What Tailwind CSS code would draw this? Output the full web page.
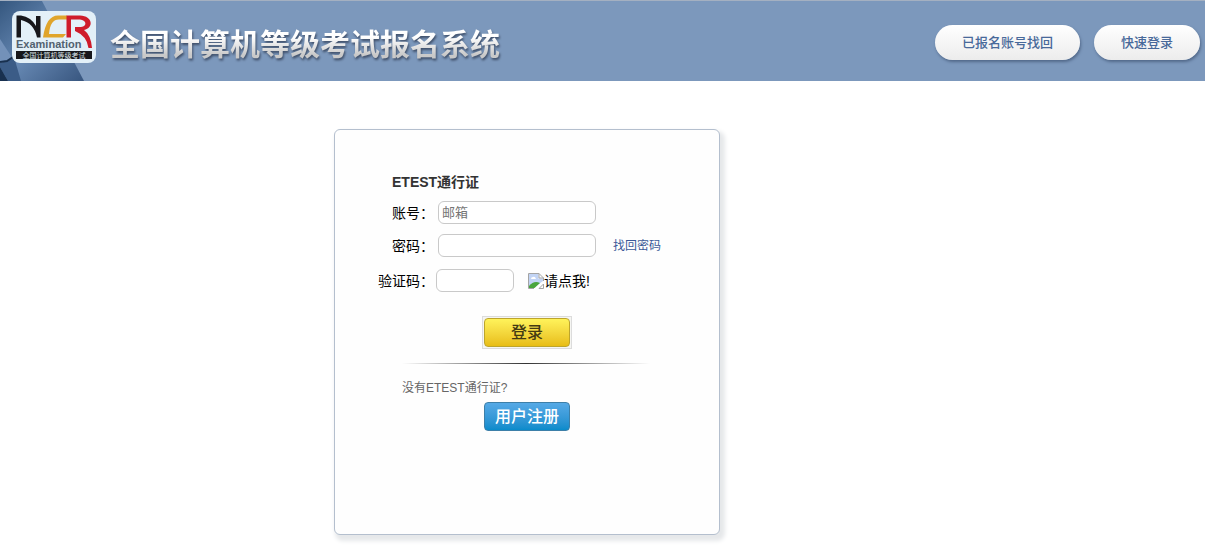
<!DOCTYPE html>
<html lang="zh-CN">
<head>
<meta charset="utf-8">
<meta name="viewport" content="width=device-width, initial-scale=1">
<title>全国计算机等级考试报名系统</title>
<script src="https://cdn.jsdelivr.net/npm/@tailwindcss/browser@4"></script>
</head>
<body class="bg-white font-['Liberation_Sans','Noto_Sans_CJK_SC',sans-serif] text-sm text-black">
<header class="relative flex h-[81px] items-center justify-between overflow-hidden border-t border-[#a4b0c1] bg-[#7c98bc] pr-[5px] pl-3">
  <svg class="absolute top-0 left-0" width="84" height="80" viewBox="0 0 84 80" aria-hidden="true">
    <defs><linearGradient id="beam" x1="0" y1="0" x2="1" y2="1"><stop offset="0" stop-color="#35577f"/><stop offset=".5" stop-color="#6688b3"/><stop offset="1" stop-color="#38567f"/></linearGradient></defs>
    <path d="M0 0H42L84 80H0Z" fill="url(#beam)"/>
    <path d="M0 38L13 58L7 62L0 63Z" fill="#7391b9"/>
    <path d="M0 62L7 60L14 56L21 80H8L0 66Z" fill="#3b5c87"/>
    <path d="M0 61L7 60L13 56" fill="none" stroke="#18304f" stroke-width="2"/>
    <path d="M0 66L8 80H0Z" fill="#18304f"/>
  </svg>
  <div class="relative flex items-center gap-[14px]">
    <svg class="-mt-2" width="84" height="52" viewBox="0 0 84 52" role="img" aria-label="NCR Examination">
      <rect width="84" height="52" rx="8" fill="#e3f0f8"/>
      <path d="M4.500 26.500V4.500H9Q19 6 24 15V5H28.500V26.500H25Q22 12 9 9V26.500Z" fill="#17171b"/>
      <path d="M55 4.500H46C38 4.500 33 12 31 26.500H51L54 23H37C38 13 41 8.500 47 8.500H55Z" fill="#e0a52c"/>
      <path d="M54.500 26.500V4.500H68C81 5 82 17 72 19Q79 24 80 37H76.500Q75 25 63 20V16H69C76 15 74 9 68 8.500H59V26.500Z" fill="#cf1c2b"/>
      <text x="4" y="37" font-family="Liberation Sans, sans-serif" font-size="11" font-weight="700" fill="#526270">Examination</text>
      <rect x="4" y="40" width="76" height="8" fill="#17171b"/>
      <text x="42" y="47" text-anchor="middle" font-family="Noto Sans CJK SC, sans-serif" font-size="7" fill="#dce5e9">全国计算机等级考试</text>
    </svg>
    <h1 class="mt-[7px] bg-gradient-to-b from-white from-30% to-[#c9c9c9] to-75% bg-clip-text text-[30px] leading-10 font-bold whitespace-nowrap text-transparent drop-shadow-[1px_2px_1px_#40506a]">全国计算机等级考试报名系统</h1>
  </div>
  <nav class="relative flex gap-[14px] pt-[3px] text-[13px] font-medium text-[#48699a]">
    <a href="#" class="flex h-[35px] items-center rounded-full bg-gradient-to-b from-white to-[#ececec] px-[27px] pt-[2px] whitespace-nowrap shadow-[1px_2px_3px_#52698a]">已报名账号找回</a>
    <a href="#" class="flex h-[35px] items-center rounded-full bg-gradient-to-b from-white to-[#ececec] px-[27px] pt-[2px] whitespace-nowrap shadow-[1px_2px_3px_#52698a]">快速登录</a>
  </nav>
</header>
<main class="pt-12 pb-3 pl-[334px]">
  <form class="w-[386px] rounded-md border border-[#b4bfce] bg-[#fefefe] px-[43px] pt-[42px] pb-[103px] shadow-[3px_4px_4px_2px_#e6e8ea]">
    <h2 class="ml-[14px] h-[29px] leading-5 font-bold text-[#333]">ETEST通行证</h2>
    <div class="flex h-[23px] items-center">
      <label for="account" class="ml-[14px] w-[46px] whitespace-nowrap">账号：</label>
      <input id="account" type="text" placeholder="邮箱" class="h-[23px] w-[158px] rounded-md border border-[#c9c9c9] bg-white px-[3px] text-[13px] placeholder:text-[#757575]">
    </div>
    <div class="mt-[10px] flex h-[23px] items-center">
      <label for="password" class="ml-[14px] w-[46px] whitespace-nowrap">密码：</label>
      <input id="password" type="password" class="h-[23px] w-[158px] rounded-md border border-[#c9c9c9] bg-white px-[3px] text-[13px]">
      <a href="#" class="ml-[17px] text-xs whitespace-nowrap text-[#3b5998]">找回密码</a>
    </div>
    <div class="mt-3 flex h-[23px] items-center">
      <label for="code" class="w-[58px] whitespace-nowrap">验证码：</label>
      <input id="code" type="text" class="h-[23px] w-[78px] rounded-md border border-[#c9c9c9] bg-white px-[3px] text-[13px]">
      <button type="button" class="ml-[14px] flex items-center text-sm whitespace-nowrap">
        <svg width="16" height="16" viewBox="0 0 16 16" aria-hidden="true">
          <path d="M.5 .5H11L15.500 5V8L7 15.500H.5Z" fill="#fff"/>
          <path d="M1 1H10.500V5.500H15V8L8 13H1Z" fill="#c2d4f5"/>
          <path d="M3 6Q3 4 5 4Q7 3 8 6Z" fill="#fff"/>
          <path d="M1 15V13Q6 7 12 10L6.500 15Z" fill="#4aa53d"/>
          <path d="M.5 15.500V.5H11L15.500 5V8M.5 15.500H6M11 .5V5H15.500M11 15.500H15.500V11Z" fill="none" stroke="#a4a4a4"/>
        </svg>请点我!
      </button>
    </div>
    <div class="mt-6 ml-[104px] w-[90px] border border-[#dcdcdc] bg-[#f5f5f2] p-px">
      <button type="submit" class="block h-[29px] w-full rounded border border-[#bda52c] bg-gradient-to-b from-[#fff35a] to-[#e8bd12] text-base leading-none font-medium text-[#433a13]">登录</button>
    </div>
    <div class="mt-[14px] ml-6 h-px w-[248px] bg-gradient-to-r from-transparent via-[#333] to-transparent"></div>
    <p class="mt-[14px] ml-6 text-xs leading-5 text-[#666]">没有ETEST通行证?</p>
    <button type="button" class="mt-[4px] ml-[106px] block h-[29px] w-[86px] rounded border border-[#3d7fa8] bg-gradient-to-b from-[#55a9e6] to-[#078bcb] text-base leading-none font-medium text-white">用户注册</button>
  </form>
</main>
</body>
</html>
